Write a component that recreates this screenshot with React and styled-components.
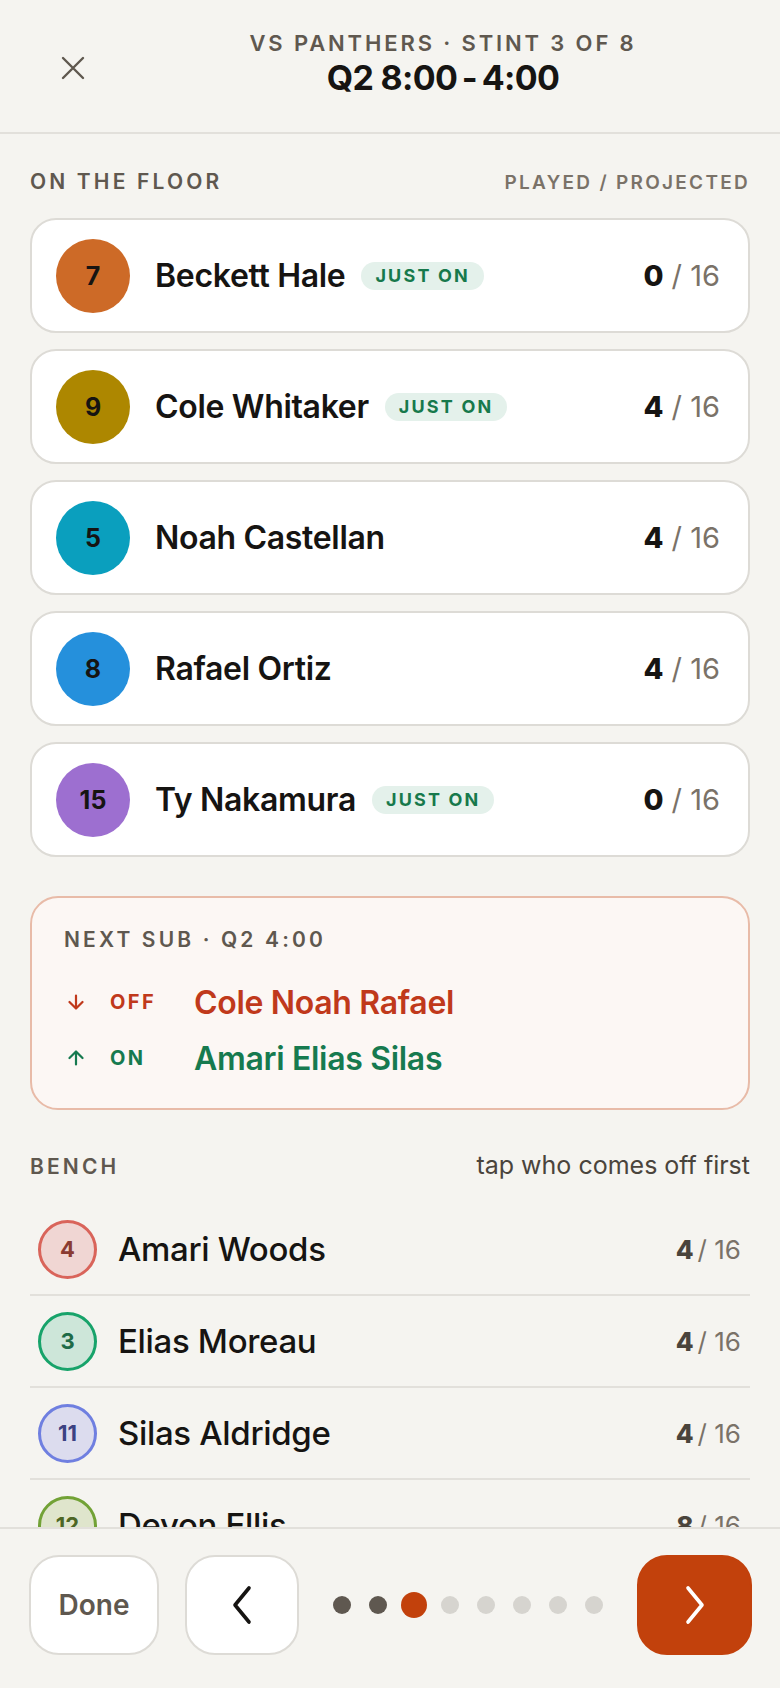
import React from "react";
import styled, { createGlobalStyle, css } from "styled-components";

const GlobalStyle = createGlobalStyle`
  * { box-sizing: border-box; }
  html, body { margin: 0; padding: 0; }
  body {
    background: #f5f4f0;
    font-family: Inter, "Noto Sans", "Liberation Sans", sans-serif;
    color: #161412;
  }
`;

const Screen = styled.div`
  display: flex;
  flex-direction: column;
  height: 100vh;
  background: #f5f4f0;
`;

const Header = styled.header`
  display: grid;
  grid-template-columns: 106px 1fr;
  height: 134px;
  padding-top: 30px;
  border-bottom: 2px solid #e2e0db;
  flex-shrink: 0;
`;

const CloseButton = styled.button`
  justify-self: start;
  margin: 14px 0 0 49px;
  width: 48px;
  height: 48px;
  display: flex;
  align-items: center;
  justify-content: center;
  background: none;
  border: none;
  padding: 0;
  color: #5f584f;
`;

const TitleBlock = styled.div`
  display: flex;
  flex-direction: column;
  align-items: center;
`;

const Kicker = styled.div`
  font-size: 22px;
  line-height: 26px;
  font-weight: 600;
  letter-spacing: 0.13em;
  color: #5f584f;
`;

const Title = styled.h1`
  margin: 2px 0 0;
  font-size: 34px;
  line-height: 40px;
  font-weight: 700;
  letter-spacing: -0.02em;
`;

const Main = styled.main`
  flex: 1;
  overflow: hidden;
  padding: 36px 30px 0;
`;

const SectionHead = styled.div`
  display: flex;
  justify-content: space-between;
  align-items: baseline;
  margin-bottom: ${(p) => p.$gap || 23}px;
  ${(p) =>
    p.$top &&
    css`
      margin-top: ${p.$top}px;
    `}
`;

const SectionLabel = styled.span`
  font-size: 21px;
  line-height: 24px;
  font-weight: 600;
  letter-spacing: 0.15em;
  color: #5f584f;
`;

const SectionHint = styled.span`
  font-size: ${(p) => (p.$caps ? 19 : 25)}px;
  line-height: 24px;
  font-weight: ${(p) => (p.$caps ? 600 : 400)};
  letter-spacing: ${(p) => (p.$caps ? "0.12em" : "0")};
  color: ${(p) => (p.$caps ? "#7a7268" : "#4a443c")};
`;

const CardList = styled.div`
  display: flex;
  flex-direction: column;
  gap: 16px;
`;

const PlayerCard = styled.div`
  display: flex;
  align-items: center;
  height: 115px;
  padding: 0 28px 0 24px;
  background: #ffffff;
  border: 2px solid #dddbd6;
  border-radius: 26px;
`;

const Jersey = styled.div`
  width: 74px;
  height: 74px;
  border-radius: 50%;
  flex-shrink: 0;
  display: flex;
  align-items: center;
  justify-content: center;
  background: ${(p) => p.$color};
  font-size: 25px;
  font-weight: 700;
  color: #161412;
`;

const PlayerName = styled.span`
  margin-left: 25px;
  font-size: 32px;
  font-weight: 600;
  letter-spacing: -0.01em;
  color: #161412;
`;

const JustOn = styled.span`
  margin-left: 16px;
  height: 28px;
  padding: 0 14px;
  display: inline-flex;
  align-items: center;
  border-radius: 14px;
  background: #e4f1eb;
  color: #17794c;
  font-size: 18px;
  font-weight: 700;
  letter-spacing: 0.12em;
`;

const Score = styled.span`
  margin-left: auto;
  font-size: ${(p) => (p.$small ? 26 : 29)}px;
  color: #7a7268;
  white-space: pre;
  b {
    font-weight: 800;
    color: ${(p) => (p.$small ? "#4a443c" : "#161412")};
    margin-right: ${(p) => (p.$small ? 4 : 0)}px;
  }
`;

const NextSub = styled.section`
  margin-top: 39px;
  padding: 30px 32px;
  border: 2px solid #e8bba8;
  border-radius: 28px;
  background: #fcf7f4;
`;

const SwapRow = styled.div`
  display: grid;
  grid-template-columns: 46px 84px 1fr;
  align-items: center;
  height: 40px;
  margin-top: ${(p) => (p.$first ? 30 : 16)}px;
  color: ${(p) => (p.$off ? "#c0391b" : "#167a4f")};
`;

const SwapTag = styled.span`
  font-size: 20px;
  font-weight: 700;
  letter-spacing: 0.12em;
`;

const SwapNames = styled.span`
  font-size: 32px;
  font-weight: 600;
  letter-spacing: -0.01em;
`;

const BenchRow = styled.div`
  display: flex;
  align-items: center;
  height: 92px;
  padding: 0 9px 0 8px;
  border-bottom: 2px solid #e2e0db;
`;

const BenchJersey = styled.div`
  width: 59px;
  height: 59px;
  border-radius: 50%;
  flex-shrink: 0;
  display: flex;
  align-items: center;
  justify-content: center;
  border: 3px solid ${(p) => p.$tone.border};
  background: ${(p) => p.$tone.bg};
  color: ${(p) => p.$tone.text};
  font-size: 22px;
  font-weight: 700;
`;

const BenchName = styled.span`
  margin-left: 21px;
  font-size: 33px;
  font-weight: 500;
  letter-spacing: -0.01em;
  color: #161412;
`;

const Footer = styled.footer`
  flex-shrink: 0;
  display: flex;
  align-items: center;
  padding: 26px 28px 33px 29px;
  border-top: 2px solid #e2e0db;
  background: #f5f4f0;
`;

const FooterButton = styled.button`
  height: 100px;
  width: ${(p) => p.$w}px;
  margin-left: ${(p) => p.$ml || 0}px;
  border-radius: 30px;
  display: flex;
  align-items: center;
  justify-content: center;
  padding: 0;
  font-family: inherit;
  font-size: 28px;
  font-weight: 600;
  color: #5f584f;
  background: ${(p) => (p.$primary ? "#c2410c" : "#ffffff")};
  border: 2px solid ${(p) => (p.$primary ? "#c2410c" : "#dddbd6")};
`;

const Dots = styled.div`
  flex: 1;
  display: flex;
  justify-content: center;
`;

const DotSlot = styled.span`
  width: 36px;
  display: flex;
  justify-content: center;
  align-items: center;
`;

const Dot = styled.span`
  width: ${(p) => (p.$state === "active" ? 26 : 18)}px;
  height: ${(p) => (p.$state === "active" ? 26 : 18)}px;
  border-radius: 50%;
  background: ${(p) =>
    p.$state === "active" ? "#c2410c" : p.$state === "done" ? "#5f5850" : "#d6d4cf"};
`;

const floor = [
  { no: 7, name: "Beckett Hale", color: "#cd6a27", fresh: true, played: 0 },
  { no: 9, name: "Cole Whitaker", color: "#ad8700", fresh: true, played: 4 },
  { no: 5, name: "Noah Castellan", color: "#0a9fbe", fresh: false, played: 4 },
  { no: 8, name: "Rafael Ortiz", color: "#2590dc", fresh: false, played: 4 },
  { no: 15, name: "Ty Nakamura", color: "#9d6fd0", fresh: true, played: 0 },
];

const tones = {
  red: { border: "#d9645a", bg: "#f0d6d3", text: "#8a3b32" },
  green: { border: "#17a36a", bg: "#cde6d9", text: "#1e6b47" },
  blue: { border: "#6f7fe0", bg: "#dcdcee", text: "#3c4282" },
  olive: { border: "#72a236", bg: "#dfe5cc", text: "#4d6625" },
};

const bench = [
  { no: 4, name: "Amari Woods", tone: "red", played: 4 },
  { no: 3, name: "Elias Moreau", tone: "green", played: 4 },
  { no: 11, name: "Silas Aldridge", tone: "blue", played: 4 },
  { no: 12, name: "Devon Ellis", tone: "olive", played: 8 },
];

const Arrow = ({ up }) => (
  <svg width="18" height="16" viewBox="0 0 18 16" fill="none" stroke="currentColor"
    strokeWidth="2.2" strokeLinecap="round" strokeLinejoin="round"
    style={{ marginLeft: 3, transform: up ? "rotate(180deg)" : "none" }}>
    <path d="M9 1.5v12.5M2.5 8l6.5 6.5L15.5 8" />
  </svg>
);

export default function App() {
  const stints = ["done", "done", "active", "todo", "todo", "todo", "todo", "todo"];
  return (
    <Screen>
      <GlobalStyle />
      <Header>
        <CloseButton aria-label="Close">
          <svg width="24" height="24" viewBox="0 0 24 24" fill="none" stroke="currentColor"
            strokeWidth="2.4" strokeLinecap="round">
            <path d="M2 2l20 20M22 2L2 22" />
          </svg>
        </CloseButton>
        <TitleBlock>
          <Kicker>VS PANTHERS · STINT 3 OF 8</Kicker>
          <Title>Q2 8:00{"\u2009-\u2009"}4:00</Title>
        </TitleBlock>
      </Header>

      <Main>
        <SectionHead>
          <SectionLabel>ON THE FLOOR</SectionLabel>
          <SectionHint $caps>PLAYED / PROJECTED</SectionHint>
        </SectionHead>
        <CardList>
          {floor.map((p) => (
            <PlayerCard key={p.no}>
              <Jersey $color={p.color}>{p.no}</Jersey>
              <PlayerName>{p.name}</PlayerName>
              {p.fresh && <JustOn>JUST ON</JustOn>}
              <Score>
                <b>{p.played}</b> / 16
              </Score>
            </PlayerCard>
          ))}
        </CardList>

        <NextSub>
          <SectionLabel>NEXT SUB · Q2 4:00</SectionLabel>
          <SwapRow $first $off>
            <Arrow />
            <SwapTag>OFF</SwapTag>
            <SwapNames>Cole Noah Rafael</SwapNames>
          </SwapRow>
          <SwapRow>
            <Arrow up />
            <SwapTag>ON</SwapTag>
            <SwapNames>Amari Elias Silas</SwapNames>
          </SwapRow>
        </NextSub>

        <SectionHead $top={43} $gap={25}>
          <SectionLabel>BENCH</SectionLabel>
          <SectionHint>tap who comes off first</SectionHint>
        </SectionHead>
        {bench.map((p) => (
          <BenchRow key={p.no}>
            <BenchJersey $tone={tones[p.tone]}>{p.no}</BenchJersey>
            <BenchName>{p.name}</BenchName>
            <Score $small>
              <b>{p.played}</b>/ 16
            </Score>
          </BenchRow>
        ))}
      </Main>

      <Footer>
        <FooterButton $w={130}>Done</FooterButton>
        <FooterButton $w={114} $ml={26} aria-label="Previous">
          <svg width="24" height="40" viewBox="0 0 24 40" fill="none" stroke="#161412"
            strokeWidth="3.6" strokeLinecap="round" strokeLinejoin="round">
            <path d="M19 3L5 20l14 17" />
          </svg>
        </FooterButton>
        <Dots>
          {stints.map((s, i) => (
            <DotSlot key={i}>
              <Dot $state={s} />
            </DotSlot>
          ))}
        </Dots>
        <FooterButton $w={115} $primary aria-label="Next">
          <svg width="24" height="40" viewBox="0 0 24 40" fill="none" stroke="#ffffff"
            strokeWidth="3.6" strokeLinecap="round" strokeLinejoin="round">
            <path d="M5 3l14 17L5 37" />
          </svg>
        </FooterButton>
      </Footer>
    </Screen>
  );
}
